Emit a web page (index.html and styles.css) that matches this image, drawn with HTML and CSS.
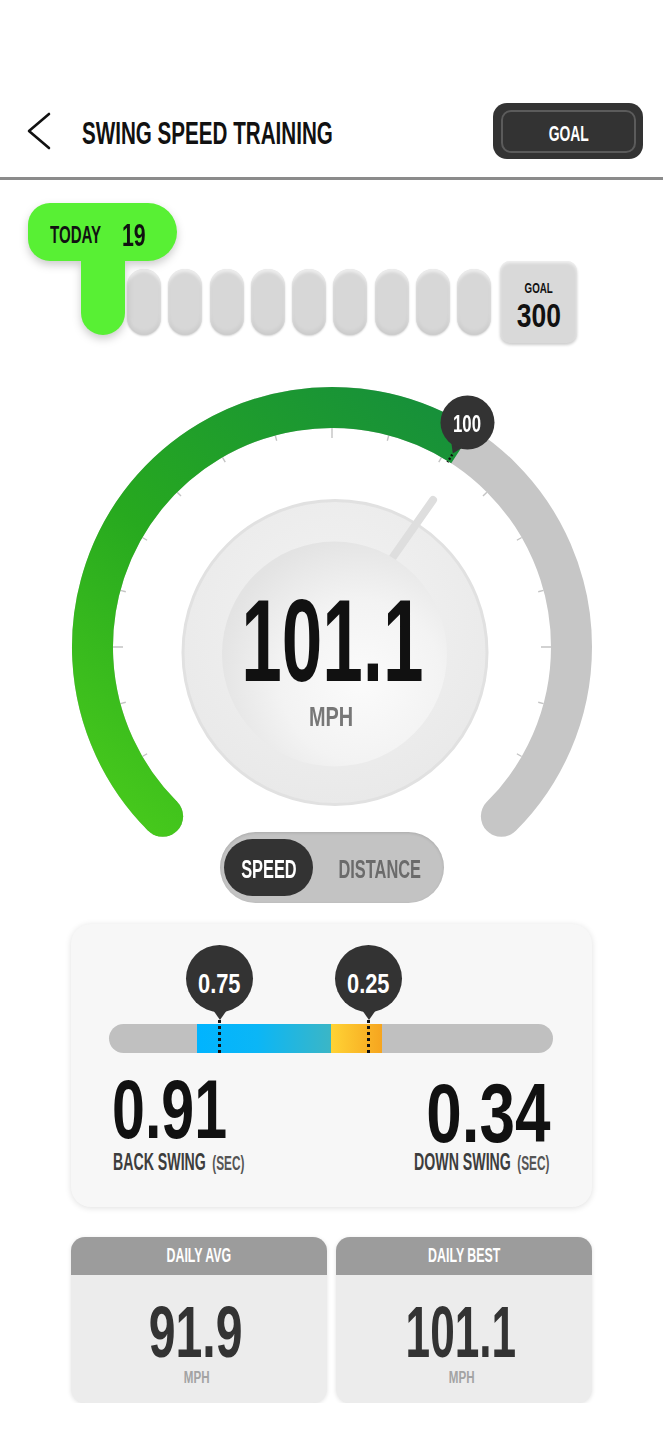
FILE: index.html
```html
<!DOCTYPE html>
<html>
<head>
  <meta charset="UTF-8">
  <title>Swing Speed Training</title>
  <link rel="stylesheet" href="styles.css">
</head>
<body>
<div class="app">
  <div class="status"></div>

  <header class="topbar">
    <a class="back" href="javascript:;">
      <svg width="26" height="40" viewBox="0 0 26 40"><path d="M23 3 L3 20 L23 37" fill="none" stroke="#111" stroke-width="2.6" stroke-linecap="round" stroke-linejoin="round"/></svg>
    </a>
    <h1 class="title"><span class="sq">SWING SPEED TRAINING</span></h1>
    <a class="goal-btn" href="javascript:;"><span class="goal-btn-in"><span class="sq">GOAL</span></span></a>
  </header>

  <!-- today / goal progress -->
  <section class="progress">
    <div class="flag">
      <div class="flag-head"><span class="sq today">TODAY</span><span class="sq today-num">19</span></div>
      <div class="flag-stem"></div>
    </div>
    <div class="track">
      <i class="slot"></i><i class="slot"></i><i class="slot"></i>
      <i class="slot"></i><i class="slot"></i><i class="slot"></i>
      <i class="slot"></i><i class="slot"></i><i class="slot"></i>
      <div class="goal-box"><span class="sq goal-lbl">GOAL</span><span class="sq goal-num">300</span></div>
    </div>
  </section>

  <!-- speed gauge -->
  <div class="gauge-wrap">
    <svg class="gauge" width="663" height="472" viewBox="0 360 663 472">
      <defs>
        <linearGradient id="arcGreen" gradientUnits="userSpaceOnUse" x1="150" y1="830" x2="470" y2="420">
          <stop offset="0" stop-color="#46c81c"/>
          <stop offset=".45" stop-color="#27a91f"/>
          <stop offset="1" stop-color="#168f3b"/>
        </linearGradient>
        <radialGradient id="dialOuter" cx="50%" cy="40%" r="60%">
          <stop offset="0" stop-color="#f3f3f3"/>
          <stop offset="1" stop-color="#e9e9e9"/>
        </radialGradient>
        <radialGradient id="dialInner" cx="62%" cy="62%" r="65%">
          <stop offset="0" stop-color="#fbfbfb"/>
          <stop offset=".55" stop-color="#f3f3f3"/>
          <stop offset="1" stop-color="#e3e3e3"/>
        </radialGradient>
      </defs>
      <path class="ticks" d="M332 438L332 428 M276.7 440.8L275.3 435.5 M387.3 440.8L388.7 435.5 M225.25 462.1L222.5 457.35 M438.75 462.1L441.5 457.35 M181.03 496.03L177.15 492.15 M482.97 496.03L486.85 492.15 M147.11 540.25L142.35 537.5 M516.89 540.25L521.65 537.5 M125.78 591.74L120.47 590.32 M538.22 591.74L543.53 590.32 M123 647L113 647 M541 647L551 647 M125.78 702.26L120.47 703.68 M538.22 702.26L543.53 703.68 M147.11 753.75L142.35 756.5 M516.89 753.75L521.65 756.5"/>
      <path d="M162.65 816.35 A239.5 239.5 0 1 1 501.35 816.35" fill="none" stroke="#c6c6c6" stroke-width="41" stroke-linecap="round"/>
      <path d="M162.65 816.35 A239.5 239.5 0 0 1 462.4 446.1" fill="none" stroke="url(#arcGreen)" stroke-width="41"/>
      <circle cx="162.65" cy="816.35" r="20.5" fill="url(#arcGreen)"/>

      <path d="M465.3 445.8 L452.8 453.6 L450.9 439 Z" fill="#333"/>
      <circle cx="467.5" cy="422.5" r="27" fill="#333"/>
      <line x1="452.3" y1="454.5" x2="447.5" y2="462.1" stroke="#111" stroke-width="2.4" stroke-dasharray="2 2"/>
      <text class="pin-text" x="467" y="431.7" text-anchor="middle" textLength="28" lengthAdjust="spacingAndGlyphs">100</text>

      <circle cx="335" cy="652.5" r="152" fill="url(#dialOuter)" stroke="#e1e1e1" stroke-width="3"/>
      <line x1="393" y1="557" x2="433" y2="500" stroke="#dedede" stroke-width="8" stroke-linecap="round"/>
      <circle cx="334.5" cy="654" r="112.5" fill="url(#dialInner)"/>
    </svg>
    <div class="dial-text">
      <div class="dial-num"><span class="sq">101.1</span></div>
      <div class="dial-unit"><span class="sq">MPH</span></div>
    </div>
  </div>

  <div class="mode">
    <div class="toggle">
      <a class="toggle-on" href="javascript:;"><span class="sq">SPEED</span></a>
      <a class="toggle-off" href="javascript:;"><span class="sq">DISTANCE</span></a>
    </div>
  </div>

  <!-- back swing / down swing timing -->
  <section class="timing">
    <div class="bar">
      <div class="seg seg-blue" style="left:19.77%;width:30.27%"></div>
      <div class="seg seg-yellow" style="left:50.05%;width:11.37%"></div>
      <div class="dots" style="left:24.9%"></div>
      <div class="dots" style="left:58.5%"></div>
      <div class="pin" style="left:24.9%"><span class="sq">0.75</span></div>
      <div class="pin" style="left:58.5%"><span class="sq">0.25</span></div>
    </div>
    <div class="swing">
      <div class="swing-col left">
        <div class="swing-num"><span class="sq">0.91</span></div>
        <div class="swing-lbl"><span class="sq">BACK SWING<small>(SEC)</small></span></div>
      </div>
      <div class="swing-col right">
        <div class="swing-num"><span class="sq">0.34</span></div>
        <div class="swing-lbl"><span class="sq">DOWN SWING<small>(SEC)</small></span></div>
      </div>
    </div>
  </section>

  <section class="stats">
    <div class="stat">
      <div class="stat-head"><span class="sq">DAILY AVG</span></div>
      <div class="stat-num"><span class="sq">91.9</span></div>
      <div class="stat-unit"><span class="sq">MPH</span></div>
    </div>
    <div class="stat">
      <div class="stat-head"><span class="sq">DAILY BEST</span></div>
      <div class="stat-num best"><span class="sq">101.1</span></div>
      <div class="stat-unit"><span class="sq">MPH</span></div>
    </div>
  </section>
</div>
</body>
</html>
```

FILE: styles.css
```css
* {
  margin: 0;
  padding: 0;
  box-sizing: border-box;
}
body {
  background: #fff;
  font-family: "Liberation Sans Narrow", "Liberation Sans", Arial, sans-serif;
  font-weight: 700;
  color: #111;
}
a {
  color: inherit;
  text-decoration: none;
}
.app {
  width: 663px;
}
/* condensed look: squeeze the installed sans to the app's narrow face */
.sq {
  display: inline-block;
  white-space: nowrap;
  transform-origin: left center;
}

/* header */
.status {
  height: 103px;
}
.topbar {
  display: flex;
  align-items: center;
  height: 77px;
  padding: 0 20px 18px 26px;
  border-bottom: 3px solid #8b8b8b;
}
.back {
  display: block;
  width: 26px;
  height: 40px;
}
.back svg {
  display: block;
}
.title {
  flex: 1;
  margin: 5px 0 0 30px;
  font-size: 31px;
  line-height: 1;
  font-weight: 700;
}
.title .sq {
  transform: scaleX(.665);
}
.goal-btn {
  display: flex;
  width: 150px;
  height: 56px;
  padding: 7px 7px 6px 8px;
  background: #333;
  border-radius: 14px;
}
.goal-btn-in {
  flex: 1;
  display: flex;
  align-items: center;
  justify-content: center;
  padding-top: 4px;
  border: 2px solid #5b5b5b;
  border-radius: 10px;
  color: #fff;
  font-size: 22px;
  line-height: 1;
}
.goal-btn-in .sq {
  transform: scaleX(.63);
  transform-origin: center;
}

/* progress */
.progress {
  display: flex;
  align-items: flex-start;
  margin-top: 23px;
  padding-left: 81px;
}
.flag {
  flex: none;
  width: 44px;
  filter: drop-shadow(0 4px 4px rgba(0, 0, 0, .2));
}
.flag-head {
  display: flex;
  align-items: center;
  width: 149px;
  height: 58px;
  margin-left: -53px;
  padding: 5px 0 0 21.5px;
  background: #58f034;
  border-radius: 22px 29px 29px 22px;
}
.flag-stem {
  height: 74px;
  background: #58f034;
  border-radius: 0 0 22px 22px;
}
.today {
  font-size: 24px;
  line-height: 1;
  transform: scaleX(.628);
}
.today-num {
  margin-left: -9px;
  font-size: 32px;
  line-height: 1;
  transform: scaleX(.667);
}
.track {
  display: flex;
  align-items: center;
  gap: 7.3px;
  margin: 58px 0 0 2px;
}
.slot {
  flex: none;
  width: 34px;
  height: 66px;
  border-radius: 17px;
  background: #d7d7d7;
  box-shadow: inset 0 3px 3px rgba(255, 255, 255, .55), inset 0 -3px 4px rgba(0, 0, 0, .06), 0 1px 2px rgba(0, 0, 0, .18);
}
.goal-box {
  flex: none;
  display: flex;
  flex-direction: column;
  align-items: center;
  width: 77px;
  height: 82px;
  margin-left: 1.7px;
  padding-top: 19px;
  background: #d9d9d9;
  border-radius: 10px;
  box-shadow: inset 0 2px 3px rgba(255, 255, 255, .6), 0 2px 3px rgba(0, 0, 0, .2);
}
.goal-lbl {
  font-size: 15px;
  line-height: 1;
  transform: scaleX(.65);
  transform-origin: center;
}
.goal-num {
  margin-top: 3.6px;
  font-size: 33.5px;
  line-height: 1;
  transform: scaleX(.79);
  transform-origin: center;
}

/* gauge */
.gauge-wrap {
  position: relative;
  margin-top: 17px;
}
.gauge {
  display: block;
  overflow: visible;
}
.ticks {
  fill: none;
  stroke: #c4c4c4;
  stroke-width: 1.4;
}
.pin-text {
  font-size: 23px;
  fill: #fff;
}
.dial-text {
  position: absolute;
  top: 237.3px;
  left: 0;
  right: 0;
  text-align: center;
}
.dial-num {
  font-size: 117px;
  line-height: 88px;
  color: #111;
}
.dial-num .sq {
  transform: translateX(1px) scaleX(.623);
  transform-origin: center;
}
.dial-unit {
  margin-top: 20.7px;
  font-size: 28px;
  line-height: 22px;
  color: #777;
}
.dial-unit .sq {
  transform: scaleX(.71);
  transform-origin: center;
}

/* speed / distance switch */
.mode {
  display: flex;
  justify-content: center;
}
.toggle {
  display: flex;
  align-items: center;
  width: 224px;
  height: 71px;
  padding: 7px 4px;
  background: #c3c3c3;
  border-radius: 36px;
  box-shadow: inset 0 1px 3px rgba(0, 0, 0, .12);
  font-size: 26.5px;
  line-height: 1;
}
.toggle-on {
  display: flex;
  align-items: center;
  justify-content: center;
  width: 111px;
  height: 57px;
  padding-top: 4px;
  background: #333;
  border-radius: 29px;
  color: #fff;
}
.toggle-off {
  flex: 1;
  padding: 4px 4px 0 0;
  text-align: center;
  color: #6b6b6b;
}
.toggle .sq {
  transform: scaleX(.618);
  transform-origin: center;
}

/* timing card */
.timing {
  margin: 21px 71px 0;
  padding: 100px 39px 33px 38px;
  background: #f7f7f7;
  border-radius: 20px;
  box-shadow: 0 1px 6px rgba(0, 0, 0, .13);
}
.bar {
  position: relative;
  height: 29px;
  border-radius: 15px;
  background: #c0c0c0;
}
.seg {
  position: absolute;
  top: 0;
  bottom: 0;
}
.seg-blue {
  background: linear-gradient(90deg, #00b4ff 0%, #0bb6f6 45%, #3bb6c6 100%);
}
.seg-yellow {
  background: linear-gradient(90deg, #ffd335, #f6a51f);
}
.dots {
  position: absolute;
  top: -4px;
  bottom: 0;
  width: 3px;
  margin-left: -1.5px;
  background: repeating-linear-gradient(to bottom, #111 0 3px, transparent 3px 6px);
}
.pin {
  position: absolute;
  bottom: calc(100% + 12px);
  display: flex;
  align-items: center;
  justify-content: center;
  width: 67px;
  height: 67px;
  margin-left: -33.5px;
  padding-top: 10px;
  border-radius: 50%;
  background: #333;
  color: #fff;
  font-size: 28px;
  line-height: 1;
}
.pin::after {
  content: "";
  position: absolute;
  left: 50%;
  top: 100%;
  margin: -2px 0 0 -7px;
  border: 7px solid transparent;
  border-top: 10px solid #333;
  border-bottom: 0;
}
.pin .sq {
  transform: scaleX(.78);
  transform-origin: center;
}
.swing {
  display: grid;
  grid-template-columns: minmax(0, 1fr) minmax(0, 1fr);
  margin-top: 20px;
}
.swing-col.left {
  padding-left: 4px;
}
.swing-col.right {
  display: flex;
  flex-direction: column;
  align-items: flex-end;
  padding-right: 4px;
}
.swing-num {
  font-size: 84px;
  line-height: 72px;
  color: #111;
}
.left .swing-num {
  margin-left: -1.5px;
}
.right .swing-num {
  margin-right: -1.5px;
}
.left .swing-num .sq {
  transform: scaleX(.704);
}
.right .swing-num .sq {
  transform: translateY(4px) scaleX(.76);
  transform-origin: right center;
}
.swing-lbl {
  margin-top: 5px;
  font-size: 24px;
  line-height: 1;
  color: #3d3d3d;
}
.swing-lbl .sq {
  transform: scaleX(.59);
}
.right .swing-lbl .sq {
  transform-origin: right center;
}
.swing-lbl small {
  margin-left: 11px;
  font-size: 20px;
  color: #555;
}

/* daily stats */
.stats {
  display: grid;
  grid-template-columns: 1fr 1fr;
  gap: 9px;
  margin: 30px 71px 0;
}
.stat {
  height: 166px;
  overflow: hidden;
  border-radius: 14px;
  background: #ececec;
  box-shadow: 0 1px 4px rgba(0, 0, 0, .12);
  text-align: center;
}
.stat .sq {
  transform-origin: center;
}
.stat-head {
  height: 38px;
  padding-top: 7.3px;
  background: #9c9c9c;
  color: #fff;
  font-size: 21px;
  line-height: 1;
}
.stat-head .sq {
  transform: scaleX(.59);
}
.stat-num {
  padding-top: 20.6px;
  font-size: 72.6px;
  line-height: 1;
  color: #333;
}
.stat-num .sq {
  transform: translateX(-3px) scaleX(.664);
}
.stat-num.best .sq {
  transform: translateX(-3px) scaleX(.608);
}
.stat-unit {
  margin-top: 1.6px;
  font-size: 16.8px;
  line-height: 1;
  color: #a3a3a3;
}
.stat-unit .sq {
  transform: translateX(-2px) scaleX(.69);
}
```
